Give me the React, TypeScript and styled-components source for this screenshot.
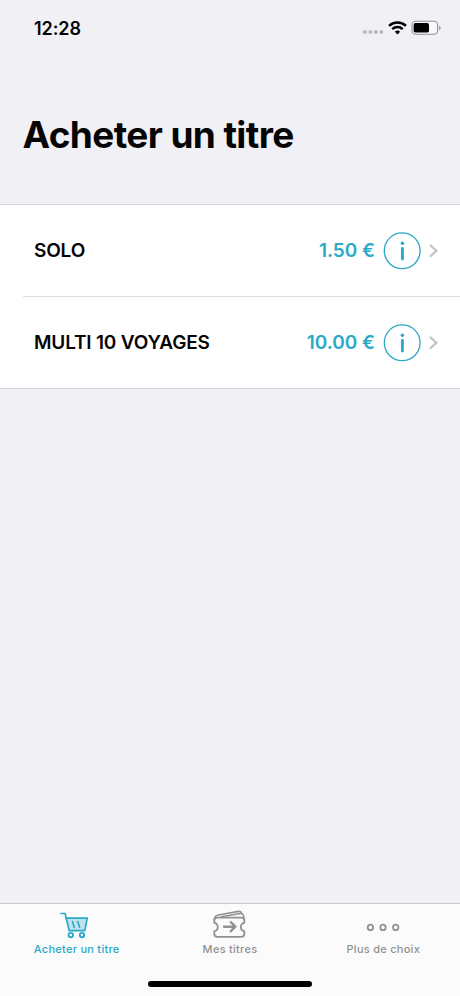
import React from 'react';
import styled, { createGlobalStyle } from 'styled-components';

const TEAL = '#2ba9c6';

const GlobalStyle = createGlobalStyle`
  * { box-sizing: border-box; }
  body { margin: 0; background: #f1f0f5; }
`;

const Screen = styled.div`
  display: flex;
  flex-direction: column;
  width: 460px;
  height: 996px;
  background: #f1f0f5;
  color: #050505;
  font-family: Inter, 'Liberation Sans', sans-serif;
  overflow: hidden;
`;

const StatusBar = styled.header`
  display: flex;
  justify-content: space-between;
  align-items: center;
  height: 56px;
  padding: 0 18px 0 34px;
`;

const Clock = styled.time`
  font-size: 18px;
  font-weight: 600;
  letter-spacing: -0.1px;
`;

const StatusIcons = styled.svg`
  display: block;
  width: 80px;
  height: 20px;
`;

const Title = styled.h1`
  height: 148px;
  margin: 0;
  padding: 56px 0 0 22.5px;
  font-size: 37px;
  line-height: 45px;
  font-weight: 700;
  letter-spacing: -0.6px;
  white-space: nowrap;
`;

const TicketList = styled.ul`
  margin: 0;
  padding: 0;
  list-style: none;
  background: #fff;
  border-top: 1px solid #d6d5da;
  border-bottom: 1px solid #d6d5da;
`;

const TicketRow = styled.li`
  display: flex;
  align-items: center;
  height: 91px;
  margin-left: 23px;
  padding: 0 21px 0 11px;
  font-size: 19px;
  line-height: 23px;
  font-weight: 600;
  white-space: nowrap;

  & + & {
    height: 92px;
    border-top: 1px solid #dddddf;
  }
`;

const TicketName = styled.span`
  flex: 1;
  letter-spacing: -0.18px;
`;

const Price = styled.span`
  margin-right: 8px;
  color: ${TEAL};
`;

const InfoIcon = styled.svg`
  display: block;
  width: 38px;
  height: 38px;
`;

const Chevron = styled.svg`
  display: block;
  width: 11px;
  height: 16px;
  margin-left: 7px;
`;

const TabBar = styled.nav`
  display: grid;
  grid-template-columns: repeat(3, 1fr);
  height: 70px;
  margin-top: auto;
  background: #fbfbfc;
  border-top: 1px solid #c9c9ce;
`;

const Tab = styled.a<{ $active?: boolean }>`
  display: flex;
  flex-direction: column;
  align-items: center;
  padding-top: 5px;
  color: ${({ $active }) => ($active ? TEAL : '#929292')};
  font-size: 11px;
  line-height: 14px;
  font-weight: 500;
  letter-spacing: 0.27px;
  white-space: nowrap;
`;

const TabIcon = styled.svg`
  display: block;
  width: 40px;
  height: 34px;
  margin-bottom: -1px;
  fill: none;
  stroke: currentColor;
  stroke-linecap: round;
  stroke-linejoin: round;
`;

const HomeArea = styled.footer`
  display: flex;
  justify-content: center;
  height: 23px;
  padding-top: 8px;
  background: #fbfbfc;
`;

const HomeIndicator = styled.div`
  width: 164px;
  height: 6px;
  border-radius: 3px;
  background: #000;
`;

const tickets = [
  { name: 'SOLO', price: '1.50 €' },
  { name: 'MULTI 10 VOYAGES', price: '10.00 €' },
];

export default function App() {
  return (
    <Screen>
      <GlobalStyle />
      <StatusBar>
        <Clock>12:28</Clock>
        <StatusIcons viewBox="0 0 80 20">
          <g fill="#b9b9be">
            <circle cx="2.8" cy="14" r="2" />
            <circle cx="8.3" cy="14" r="2" />
            <circle cx="13.8" cy="14" r="2" />
            <circle cx="19.3" cy="14" r="2" />
          </g>
          <g fill="none" stroke="#000" strokeWidth="2.5">
            <path d="M27.1 7.8a12.2 12.2 0 0 1 16.8 0" />
            <path d="M30.3 11.2a7.5 7.5 0 0 1 10.4 0" />
          </g>
          <path d="M35.5 16.4l-2.6-2.7a3.8 3.8 0 0 1 5.2 0z" fill="#000" />
          <rect x="50" y="3.3" width="25.6" height="13" rx="3.7" fill="#f8f8fa" stroke="#8f8f93" strokeWidth="1.1" />
          <rect x="51.6" y="5.1" width="15.4" height="9.4" rx="1.8" fill="#000" />
          <path d="M77.2 7.8v4.4c2-.8 2-3.6 0-4.4z" fill="#929296" />
        </StatusIcons>
      </StatusBar>
      <Title>Acheter un titre</Title>
      <TicketList>
        {tickets.map((ticket) => (
          <TicketRow key={ticket.name}>
            <TicketName>{ticket.name}</TicketName>
            <Price>{ticket.price}</Price>
            <InfoIcon viewBox="0 0 38 38">
              <circle cx="19.2" cy="18.8" r="17.9" fill="none" stroke={TEAL} strokeWidth="1.3" />
              <circle cx="19.4" cy="11.2" r="1.7" fill={TEAL} />
              <path d="M19.4 16.4v10.6" stroke={TEAL} strokeWidth="2.9" strokeLinecap="round" />
            </InfoIcon>
            <Chevron viewBox="0 0 11 16">
              <path d="M1.8 1.8l6.6 6-6.6 6" fill="none" stroke="#c3c3c5" strokeWidth="2.2" />
            </Chevron>
          </TicketRow>
        ))}
      </TicketList>
      <TabBar>
        <Tab $active>
          <TabIcon viewBox="0 0 40 34">
            <path d="M9.3 9.2h21l-2.6 12.4H12.4z" fill="#bde4ee" stroke="none" />
            <path d="M4 4.5h4.1l4.1 17.2h15.6L30.3 9.2H9.4" strokeWidth="1.7" />
            <path d="M15.4 12.6l1.8 5.6M20.8 12.6l1.8 5.6" strokeWidth="1.6" />
            <circle cx="13.8" cy="26.1" r="2.2" strokeWidth="1.9" />
            <circle cx="25" cy="26.1" r="2.2" strokeWidth="1.9" />
          </TabIcon>
          Acheter un titre
        </Tab>
        <Tab>
          <TabIcon viewBox="0 0 40 34">
            <path
              d="M7.2 8.6h24.4q2.7 0 2.7 2.7v2.5c-4.6.8-4.6 7.5 0 8.3v2.7q0 3-2.9 3H7.2q-2.9 0-2.9-3v-2.7c4.6-.8 4.6-7.5 0-8.3v-2.5q0-2.7 2.9-2.7z"
              strokeWidth="1.8"
            />
            <path d="M4.3 10.8q.2-4.1 4-4.8L28.6 2.4q2.2-.3 3 1.6M11.5 7.7l18.8-3.2q2.3-.2 3 1.6l.7 3" strokeWidth="1.6" />
            <path d="M14 17.7h11.2M20.8 13.2l4.6 4.5-4.6 4.5" strokeWidth="2.4" />
          </TabIcon>
          Mes titres
        </Tab>
        <Tab>
          <TabIcon viewBox="0 0 40 34" strokeWidth="1.8">
            <circle cx="7.4" cy="18.4" r="2.7" />
            <circle cx="20" cy="18.4" r="2.7" />
            <circle cx="32.7" cy="18.4" r="2.7" />
          </TabIcon>
          Plus de choix
        </Tab>
      </TabBar>
      <HomeArea>
        <HomeIndicator />
      </HomeArea>
    </Screen>
  );
}
